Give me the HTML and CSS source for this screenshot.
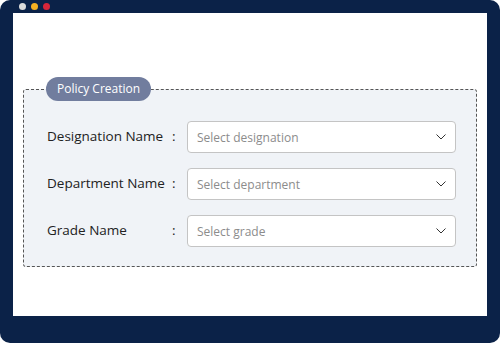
FILE: index.html
```html
<!DOCTYPE html>
<html>
<head>
  <title>Policy Creation</title>
  <link rel="stylesheet" href="styles.css">
</head>
<body>
  <div class="frame">
    <div class="topbar">
      <span class="dot dot-grey"></span>
      <span class="dot dot-yellow"></span>
      <span class="dot dot-red"></span>
    </div>
    <div class="screen">
      <fieldset class="policy">
        <legend>Policy Creation</legend>
        <div class="row">
          <label class="name">Designation Name</label>
          <span class="colon">:</span>
          <div class="picker">
            <span>Select designation</span>
            <svg width="10" height="6" viewBox="0 0 10 6"><path d="M0.5 0.5l4.5 4.5 4.5-4.5" fill="none" stroke="#333" stroke-width="1"/></svg>
          </div>
        </div>
        <div class="row">
          <label class="name">Department Name</label>
          <span class="colon">:</span>
          <div class="picker">
            <span>Select department</span>
            <svg width="10" height="6" viewBox="0 0 10 6"><path d="M0.5 0.5l4.5 4.5 4.5-4.5" fill="none" stroke="#333" stroke-width="1"/></svg>
          </div>
        </div>
        <div class="row">
          <label class="name">Grade Name</label>
          <span class="colon">:</span>
          <div class="picker">
            <span>Select grade</span>
            <svg width="10" height="6" viewBox="0 0 10 6"><path d="M0.5 0.5l4.5 4.5 4.5-4.5" fill="none" stroke="#333" stroke-width="1"/></svg>
          </div>
        </div>
      </fieldset>
    </div>
  </div>
</body>
</html>
```

FILE: styles.css
```css
body {
  margin: 0;
  font-family: "Open Sans", "Noto Sans", sans-serif;
}

.frame {
  width: 500px;
  height: 343px;
  box-sizing: border-box;
  background-color: #0b2248;
  border-radius: 10px;
  padding: 0 13px 27px;
  display: flex;
  flex-direction: column;
}

.topbar {
  height: 13px;
  display: flex;
  align-items: center;
  gap: 5px;
  padding-left: 6px;
}

.dot {
  width: 7px;
  height: 7px;
  border-radius: 50%;
}

.dot-grey { background-color: #dcdcdc; }
.dot-yellow { background-color: #f4b022; }
.dot-red { background-color: #d7263a; }

.screen {
  flex: 1;
  background-color: white;
  padding: 64px 10px 0;
}

.policy {
  margin: 0;
  padding: 20px 20px 19px 23px;
  border: 1px dashed #555;
  border-radius: 3px;
  background-color: #f0f3f7;
  display: flex;
  flex-direction: column;
  gap: 15px;
}

.policy legend {
  margin-left: -1px;
  padding: 0 11px;
  height: 24px;
  line-height: 24px;
  border-radius: 12px;
  background-color: #717d9e;
  color: white;
  font-size: 12px;
}

.row {
  display: flex;
  align-items: center;
}

.name {
  width: 125px;
  font-size: 13.5px;
  color: #222;
  padding-bottom: 2px;
}

.colon {
  width: 15px;
  font-size: 13.5px;
  color: #222;
  padding-bottom: 2px;
}

.picker {
  flex: 1;
  height: 32px;
  box-sizing: border-box;
  border: 1px solid #c4c4c4;
  border-radius: 4px;
  background-color: white;
  display: flex;
  align-items: center;
  justify-content: space-between;
  padding: 0 9px 0 9px;
  font-size: 12px;
  color: #8c8c8c;
}
```
